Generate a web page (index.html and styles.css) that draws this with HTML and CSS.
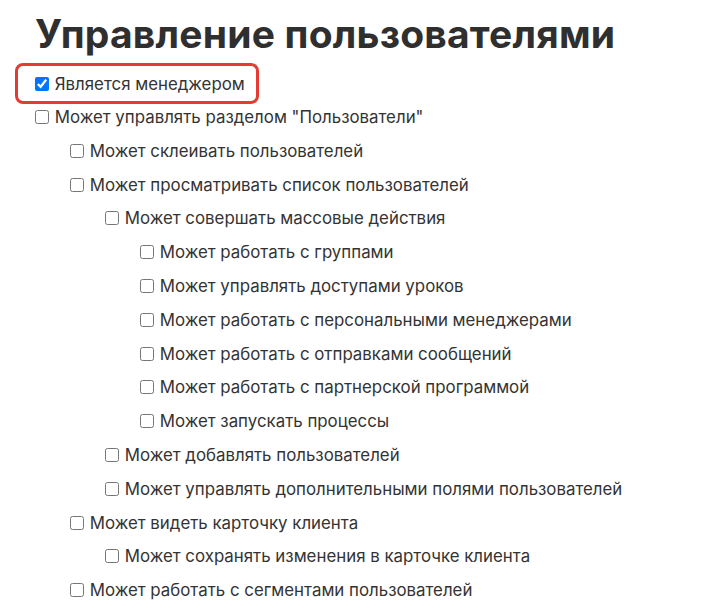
FILE: index.html
```html
<!DOCTYPE html>
<html lang="ru">
<head>
<meta charset="UTF-8">
<meta name="viewport" content="width=device-width, initial-scale=1.0">
<title>Управление пользователями</title>
<link rel="stylesheet" href="styles.css">
</head>
<body>
<div id="page">
    <h1 class="title">Управление пользователями</h1>
    <label class="perm manager"><input type="checkbox" checked> Является менеджером</label>
    <ul class="tree">
        <li>
            <label class="perm"><input type="checkbox"> Может управлять разделом "Пользователи"</label>
            <ul class="tree">
                <li><label class="perm"><input type="checkbox"> Может склеивать пользователей</label></li>
                <li>
                    <label class="perm"><input type="checkbox"> Может просматривать список пользователей</label>
                    <ul class="tree">
                        <li>
                            <label class="perm"><input type="checkbox"> Может совершать массовые действия</label>
                            <ul class="tree">
                                <li><label class="perm"><input type="checkbox"> Может работать с группами</label></li>
                                <li><label class="perm"><input type="checkbox"> Может управлять доступами уроков</label></li>
                                <li><label class="perm"><input type="checkbox"> Может работать с персональными менеджерами</label></li>
                                <li><label class="perm"><input type="checkbox"> Может работать с отправками сообщений</label></li>
                                <li><label class="perm"><input type="checkbox"> Может работать с партнерской программой</label></li>
                                <li><label class="perm"><input type="checkbox"> Может запускать процессы</label></li>
                            </ul>
                        </li>
                        <li><label class="perm"><input type="checkbox"> Может добавлять пользователей</label></li>
                        <li><label class="perm"><input type="checkbox"> Может управлять дополнительными полями пользователей</label></li>
                    </ul>
                </li>
                <li>
                    <label class="perm"><input type="checkbox"> Может видеть карточку клиента</label>
                    <ul class="tree">
                        <li><label class="perm"><input type="checkbox"> Может сохранять изменения в карточке клиента</label></li>
                    </ul>
                </li>
                <li><label class="perm"><input type="checkbox"> Может работать с сегментами пользователей</label></li>
            </ul>
        </li>
    </ul>
</div>
</body>
</html>
```

FILE: styles.css
```css
body {margin: 0;background: #fff;color: #333;font-family: Inter, "Noto Sans", sans-serif;}
ul {margin: 0;padding: 0;list-style: none;}
#page {padding: 8px 0 0 31px;}
.title {margin: 0 0 3px 4px;font-size: 39px;line-height: 52px;font-weight: 700;color: #2f2f2f;letter-spacing: 0.2px;}
.tree .tree {padding-left: 35px;}
.perm {display: block;font-size: 16.85px;line-height: 24px;margin-bottom: 9.8px;white-space: nowrap;}
.perm input {width: 14px;height: 14px;margin: 3px 1px 3px 4px;vertical-align: -1px;}
.manager {display: inline-block;margin: 0 0 1px -16px;padding: 6px 11px 5px 13px;border: 3px solid #e53b33;border-radius: 8px;}
```
